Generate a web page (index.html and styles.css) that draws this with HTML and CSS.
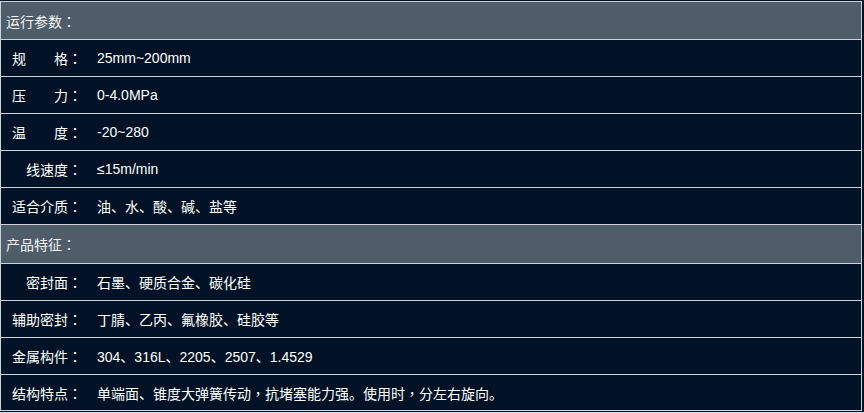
FILE: index.html
```html
<!DOCTYPE html>
<html lang="zh-CN">
<head>
<meta charset="utf-8">
<title>参数</title>
<link rel="stylesheet" href="styles.css">
</head>
<body>
<div class="sheet">
  <div class="head">运行参数<span class="p" lang="zh-TW">：</span></div>
  <div class="row"><span class="label">规　　格<span class="p" lang="zh-TW">：</span></span><span class="value">25mm~200mm</span></div>
  <div class="row"><span class="label">压　　力<span class="p" lang="zh-TW">：</span></span><span class="value">0-4.0MPa</span></div>
  <div class="row"><span class="label">温　　度<span class="p" lang="zh-TW">：</span></span><span class="value">-20~280</span></div>
  <div class="row"><span class="label">线速度<span class="p" lang="zh-TW">：</span></span><span class="value">≤15m/min</span></div>
  <div class="row"><span class="label">适合介质<span class="p" lang="zh-TW">：</span></span><span class="value">油、水、酸、碱、盐等</span></div>
  <div class="head head-tall">产品特征<span class="p" lang="zh-TW">：</span></div>
  <div class="row"><span class="label">密封面<span class="p" lang="zh-TW">：</span></span><span class="value">石墨、硬质合金、碳化硅</span></div>
  <div class="row"><span class="label">辅助密封<span class="p" lang="zh-TW">：</span></span><span class="value">丁腈、乙丙、氟橡胶、硅胶等</span></div>
  <div class="row"><span class="label">金属构件<span class="p" lang="zh-TW">：</span></span><span class="value">304、316L、2205、2507、1.4529</span></div>
  <div class="row"><span class="label">结构特点<span class="p" lang="zh-TW">：</span></span><span class="value">单端面、锥度大弹簧传动<span class="p" lang="zh-TW">，</span>抗堵塞能力强。使用时<span class="p" lang="zh-TW">，</span>分左右旋向。</span></div>
</div>
</body>
</html>
```

FILE: styles.css
```css
html {
  background: #dcdfe2;
}
body {
  margin: 0;
  width: 864px;
  height: 412px;
  background: #011226;
  font-family: "Liberation Sans", "Noto Sans CJK SC", sans-serif;
  font-size: 14px;
  color: #ffffff;
}
.sheet {
  padding-top: 1px;
  width: 862px;
}
.sheet > div {
  border: 1px solid #cdd2d6;
  border-bottom: none;
  display: flex;
  align-items: center;
  box-sizing: border-box;
}
.sheet > div:last-child {
  border-bottom: 1px solid #cdd2d6;
}
.head {
  height: 38px;
  background: #4f5d6a;
  padding-left: 5px;
  color: #f2f4f6;
}
.head-tall {
  height: 39px;
}
.row {
  height: 37px;
  gap: 15px;
}
.label {
  width: 81px;
  text-align: right;
  flex: none;
}
.value {
  white-space: nowrap;
}
.p {
  font-family: "Noto Sans CJK TC", sans-serif;
}
```
